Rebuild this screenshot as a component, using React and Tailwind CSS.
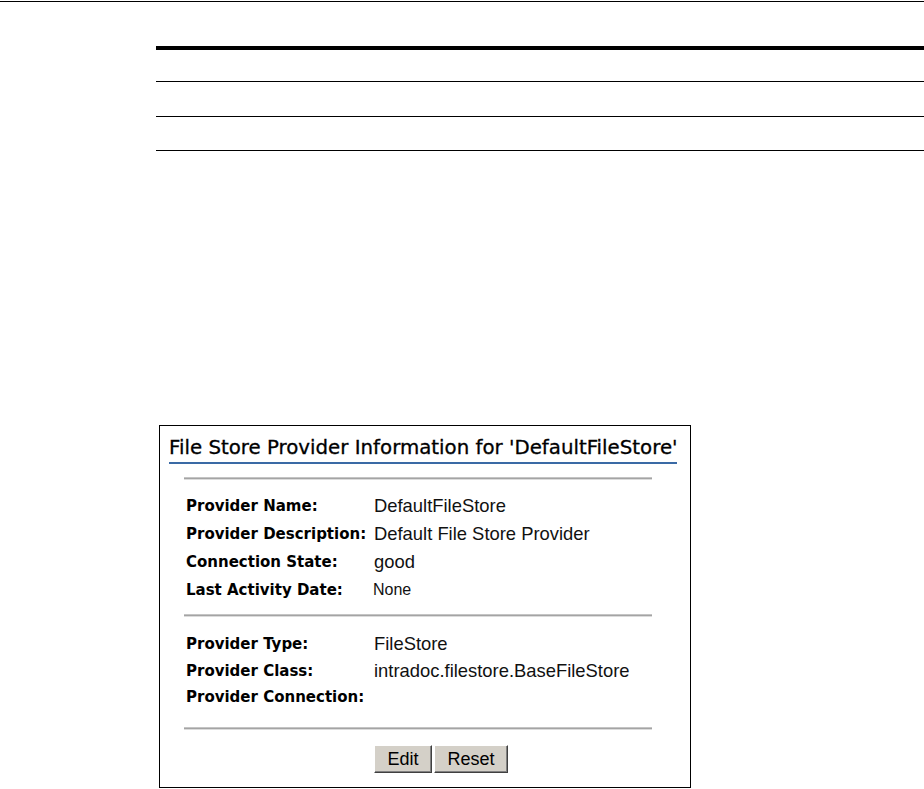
const rows1 = [
    { label: 'Provider Name:', value: 'DefaultFileStore' },
    { label: 'Provider Description:', value: 'Default File Store Provider' },
    { label: 'Connection State:', value: 'good' },
    { label: 'Last Activity Date:', value: 'None', small: true },
];

const rows2 = [
    { label: 'Provider Type:', value: 'FileStore' },
    { label: 'Provider Class:', value: 'intradoc.filestore.BaseFileStore' },
    { label: 'Provider Connection:', value: '' },
];

function Rule() {
    return <div className="ml-[24px] w-[468px] h-[3px] border-t border-[#c4c4c4] bg-[#a4a4a4] border-b border-b-[#dcdcdc]" />;
}

function InfoRow({ row, height }) {
    return (
        <div className={`grid grid-cols-[188px_1fr] items-center pl-[26px] ${height}`}>
            <span className="font-['DejaVu_Sans',sans-serif] font-bold text-[15px] text-black">{row.label}</span>
            <span className={`font-['Liberation_Sans',Arial,sans-serif] text-[#111] ${row.small ? 'text-[16px] -ml-px' : 'text-[18.4px]'}`}>
                {row.value}
            </span>
        </div>
    );
}

function Button({ children, width }) {
    return (
        <button
            className={`${width} h-[28px] bg-[#d4d0c8] border border-t-white border-l-white border-r-[#404040] border-b-[#404040] shadow-[inset_-1px_-1px_0_#808080] font-['Liberation_Sans',Arial,sans-serif] text-[18px] text-black leading-none`}
        >
            {children}
        </button>
    );
}

export default function App() {
    return (
        <div className="w-[924px] h-[789px] bg-white overflow-hidden">
            <div className="h-px bg-black mt-px" />

            <div className="ml-[156px] mt-[44px]">
                <div className="h-1 bg-black" />
                <div className="h-[31px]" />
                <div className="h-px bg-black" />
                <div className="h-[34px]" />
                <div className="h-px bg-black" />
                <div className="h-[33px]" />
                <div className="h-px bg-black" />
            </div>

            <div className="ml-[159px] mt-[274px] w-[532px] h-[363px] border border-black bg-white">
                <div className="pl-[9px] pt-[10px]">
                    <div className="w-[508px] border-b-2 border-[#3a6aa5] pb-[2px]">
                        <span className="font-['DejaVu_Sans',Verdana,sans-serif] text-[19.8px] leading-[22px] text-black whitespace-nowrap [-webkit-text-stroke:0.3px_black]">
                            File Store Provider Information for 'DefaultFileStore'
                        </span>
                    </div>
                </div>

                <div className="mt-[13px]">
                    <Rule />
                </div>
                <div className="mt-[12px]">
                    {rows1.map((row) => (
                        <InfoRow key={row.label} row={row} height="h-[28px]" />
                    ))}
                </div>
                <div className="mt-[10px]">
                    <Rule />
                </div>
                <div className="mt-[13px]">
                    {rows2.map((row) => (
                        <InfoRow key={row.label} row={row} height="h-[27px]" />
                    ))}
                </div>
                <div className="mt-[16px]">
                    <Rule />
                </div>
                <div className="mt-[15px] pl-[214px] flex gap-[2px]">
                    <Button width="w-[58px]">Edit</Button>
                    <Button width="w-[74px]">Reset</Button>
                </div>
            </div>
        </div>
    );
}
